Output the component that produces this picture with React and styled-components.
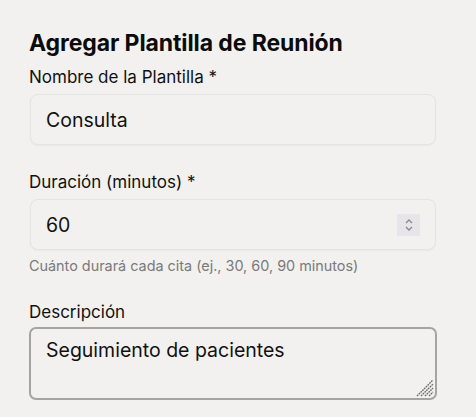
import styled, { createGlobalStyle } from 'styled-components';

const GlobalStyle = createGlobalStyle`
  html, body {
    margin: 0;
    padding: 0;
    background: #f2f1ef;
  }
  body {
    font-family: Inter, "Liberation Sans", sans-serif;
    color: #111;
  }
  * { box-sizing: border-box; }
`;

const Form = styled.form`
  width: 437px;
  padding: 29px 0 0 29px;
  display: flex;
  flex-direction: column;
`;

const Title = styled.h2`
  margin: 0 0 8px;
  font-size: 23px;
  line-height: 28px;
  font-weight: 700;
  color: #0b0b0b;
  letter-spacing: -0.1px;
`;

const Field = styled.div`
  display: flex;
  flex-direction: column;
  margin-bottom: ${(p) => p.$gap || 25}px;
`;

const Label = styled.label`
  font-size: 17px;
  line-height: 24px;
  color: #111;
  margin-bottom: ${(p) => p.$mb ?? 5}px;
`;

const InputBox = styled.div`
  position: relative;
  margin: 0 1px;
  height: 51px;
  border: 1px solid #e6e4e1;
  border-radius: 8px;
  background: #f2f1ef;
  box-shadow: 0 1px 2px rgba(0, 0, 0, 0.04);
  display: flex;
  align-items: center;
  padding: 0 15px 0 15px;
`;

const Input = styled.input`
  flex: 1;
  border: none;
  outline: none;
  background: transparent;
  font-family: inherit;
  font-size: 19.5px;
  color: #111;
  padding: 0;
`;

const Spinner = styled.div`
  width: 23px;
  height: 22px;
  background: #e7e5ea;
  display: flex;
  align-items: center;
  justify-content: center;
`;

const Help = styled.p`
  margin: 6px 0 0;
  font-size: 14.4px;
  line-height: 20px;
  color: #7a7a7a;
`;

const AreaBox = styled.div`
  position: relative;
  height: 73px;
`;

const TextArea = styled.textarea`
  width: 100%;
  height: 100%;
  resize: none;
  border: 2px solid #a4a4a4;
  border-radius: 7px;
  background: #f2f1ef;
  padding: 9px 15px;
  font-family: inherit;
  font-size: 19.5px;
  line-height: 24px;
  color: #111;
  outline: none;
`;

const Grip = styled.svg`
  position: absolute;
  right: 3px;
  bottom: 3px;
`;

export default function App() {
  return (
    <>
      <GlobalStyle />
      <Form onSubmit={(e) => e.preventDefault()}>
        <Title>Agregar Plantilla de Reunión</Title>
        <Field>
          <Label>Nombre de la Plantilla *</Label>
          <InputBox>
            <Input defaultValue="Consulta" />
          </InputBox>
        </Field>
        <Field $gap={24}>
          <Label>Duración (minutos) *</Label>
          <InputBox>
            <Input defaultValue="60" />
            <Spinner>
              <svg width="12" height="16" viewBox="0 0 12 16" fill="none" stroke="#8a8a94" strokeWidth="1.4">
                <path d="M3 6 L6 3 L9 6" />
                <path d="M3 10 L6 13 L9 10" />
              </svg>
            </Spinner>
          </InputBox>
          <Help>Cuánto durará cada cita (ej., 30, 60, 90 minutos)</Help>
        </Field>
        <Field>
          <Label $mb={3}>Descripción</Label>
          <AreaBox>
            <TextArea defaultValue="Seguimiento de pacientes" />
            <Grip width="18" height="18" viewBox="0 0 18 18" stroke="#6e6e6e" strokeWidth="1.4" strokeDasharray="1.8 0.7">
              <path d="M1 17 L17 1" />
              <path d="M5 17 L17 5" />
              <path d="M9 17 L17 9" />
              <path d="M13 17 L17 13" />
            </Grip>
          </AreaBox>
        </Field>
      </Form>
    </>
  );
}
